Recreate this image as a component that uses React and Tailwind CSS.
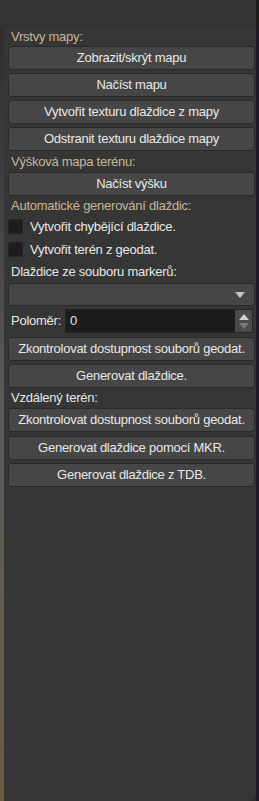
import React from "react";

const font = { fontFamily: '"Liberation Sans", Arial, sans-serif' };

function Btn({ children, className = "" }) {
  return (
    <div
      className={`h-[24px] flex items-center justify-center rounded-[3px] border border-[#2a2a2a] bg-[#464646] text-[13px] tracking-[-0.25px] text-[#e8e8e8] whitespace-nowrap ${className}`}
    >
      {children}
    </div>
  );
}

function Label({ children, className = "", tan = false }) {
  return (
    <div
      className={`flex items-center pl-[3px] text-[13px] tracking-[-0.25px] ${tan ? "text-[#c8b796]" : "text-[#e6e6e6]"} ${className}`}
    >
      {children}
    </div>
  );
}

function Check({ children }) {
  return (
    <div className="h-[23px] flex items-center">
      <div className="w-[15px] h-[15px] bg-[#1d1d1d] border border-[#262626]" />
      <span className="ml-[7px] text-[13px] tracking-[-0.25px] text-[#e8e8e8]">{children}</span>
    </div>
  );
}

export default function App() {
  return (
    <div className="w-[259px] h-[801px] flex flex-col bg-[#2b2b2b] overflow-hidden" style={font}>
      <div className="h-[27px] bg-[#333333] border-r-[3px] border-[#1e1e1e]" />
      <div className="flex-1 flex">
        <div className="w-[4px] bg-linear-to-b from-[#2e2e2e] via-[#5b5b5b] to-[#6a5b42]" />
        <div className="flex-1 bg-[#363636] rounded-br-[8px] pl-[4px] pr-[1px] flex flex-col">
          <Label tan className="h-[19px]">Vrstvy mapy:</Label>
          <Btn>Zobrazit/skrýt mapu</Btn>
          <Btn className="mt-[3px]">Načíst mapu</Btn>
          <Btn className="mt-[3px]">Vytvořit texturu dlaždice z mapy</Btn>
          <Btn className="mt-[3px]">Odstranit texturu dlaždice mapy</Btn>
          <Label tan className="h-[21px]">Výšková mapa terénu:</Label>
          <Btn>Načíst výšku</Btn>
          <Label tan className="h-[19px]">Automatické generování dlaždic:</Label>
          <Check>Vytvořit chybějící dlaždice.</Check>
          <Check>Vytvořit terén z geodat.</Check>
          <Label className="h-[22px]">Dlaždice ze souboru markerů:</Label>
          <div className="h-[23px] rounded-[3px] border border-[#2a2a2a] bg-[#464646] flex items-center justify-end pr-[9px]">
            <svg width="10" height="6" viewBox="0 0 10 6">
              <path d="M0 0 H10 L5 6 Z" fill="#c8c8c8" />
            </svg>
          </div>
          <div className="h-[24px] mt-[3px] flex items-center">
            <span className="pl-[3px] w-[57px] text-[13px] tracking-[-0.25px] text-[#e8e8e8]">Poloměr:</span>
            <div className="flex-1 h-[24px] flex border border-[#262626] mr-[2px]">
              <div className="flex-1 bg-[#1c1c1c] flex items-center pl-[4px] text-[13px] text-[#e8e8e8]">0</div>
              <div className="w-[17px] bg-[#4a4a4a] flex flex-col items-center justify-center gap-[3px]">
                <svg width="10" height="6" viewBox="0 0 10 6">
                  <path d="M0 6 H10 L5 0 Z" fill="#cfcfcf" />
                </svg>
                <svg width="10" height="6" viewBox="0 0 10 6">
                  <path d="M0 0 H10 L5 6 Z" fill="#7a7a7a" />
                </svg>
              </div>
            </div>
          </div>
          <Btn className="mt-[4px]">Zkontrolovat dostupnost souborů geodat.</Btn>
          <Btn className="mt-[3px]">Generovat dlaždice.</Btn>
          <Label className="h-[20px]">Vzdálený terén:</Label>
          <Btn>Zkontrolovat dostupnost souborů geodat.</Btn>
          <Btn className="mt-[4px]">Generovat dlaždice pomocí MKR.</Btn>
          <Btn className="mt-[3px]">Generovat dlaždice z TDB.</Btn>
        </div>
        <div className="w-[3px] bg-[#1f1a26]" />
      </div>
    </div>
  );
}
